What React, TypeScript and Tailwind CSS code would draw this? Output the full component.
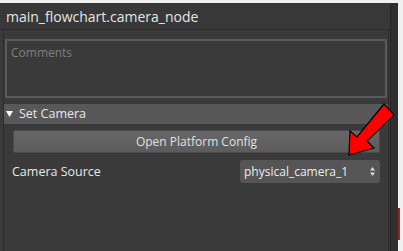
const font = { fontFamily: '"Open Sans", "Noto Sans", sans-serif' };

function RedArrow() {
  return (
    <svg
      className="absolute left-[340px] top-[100px]"
      width="60"
      height="62"
      viewBox="0 0 60 62"
    >
      <polygon
        points="44,4 54,15 27,41 34,48 9,55 10,31 17,37"
        fill="#ff0000"
        stroke="#000"
        strokeWidth="1.2"
      />
    </svg>
  );
}

function UpDown() {
  return (
    <svg width="5" height="9" viewBox="0 0 5 9">
      <polygon points="2.5,0 5,3.5 0,3.5" fill="#d8d8d8" />
      <polygon points="0,5.5 5,5.5 2.5,9" fill="#d8d8d8" />
    </svg>
  );
}

export default function App() {
  return (
    <div
      className="relative w-[403px] h-[251px] overflow-hidden bg-[#f0f0f0] pt-[3px] flex"
      style={font}
    >
      <div className="w-[390px] h-full flex flex-col bg-[#3a3a3a]">
        <div className="h-[27px] shrink-0 flex items-center px-[6px] text-[14px] text-[#e6e6e6] border-b border-[#2b2b2b] bg-[#383838]">
          main_flowchart.camera_node
        </div>
        <div className="flex-1 flex ml-[3px] border-l border-[#2c2c2c] border-r border-r-[#2c2c2c] mr-[1px]">
          <div className="flex-1 flex flex-col pt-[9px]">
            <div className="ml-[1px] mr-[1px] h-[59px] border-2 border-[#5a5a5a] bg-[#3a3a3a] px-[4px] pt-[3px] text-[12px] text-[#7f7f7f]">
              Comments
            </div>
            <div className="mt-[6px] h-[20px] bg-[#585858] flex items-center gap-[6px] pl-[2px] text-[12.5px] text-[#e8e8e8]">
              <svg width="7" height="6" viewBox="0 0 7 6">
                <polygon points="0,0 7,0 3.5,6" fill="#ffffff" />
              </svg>
              <span>Set Camera</span>
            </div>
            <div className="mt-[6px] ml-[9px] mr-[8px] h-[23px] rounded-[2px] bg-gradient-to-b from-[#676767] to-[#5c5c5c] border border-[#4a4a4a] flex items-center justify-center text-[12px] text-[#e0e0e0]">
              Open Platform Config
            </div>
            <div className="mt-[7px] flex items-center justify-between ml-[8px] mr-[8px]">
              <span className="text-[12.5px] text-[#e8e8e8] pt-[2px]">Camera Source</span>
              <div className="w-[140px] h-[23px] rounded-[3px] bg-[#555555] flex items-center justify-between pl-[4px] pr-[5px] text-[12px] text-[#ececec]">
                <span>physical_camera_1</span>
                <UpDown />
              </div>
            </div>
          </div>
        </div>
      </div>
      <div className="w-[8px] h-full bg-[#2f2f2f] border-l border-[#262626]" />
      <div className="flex-1 h-full flex flex-col pt-[205px]">
        <div className="w-[2px] h-[32px] bg-[#a31f1f]" />
      </div>
      <RedArrow />
    </div>
  );
}
